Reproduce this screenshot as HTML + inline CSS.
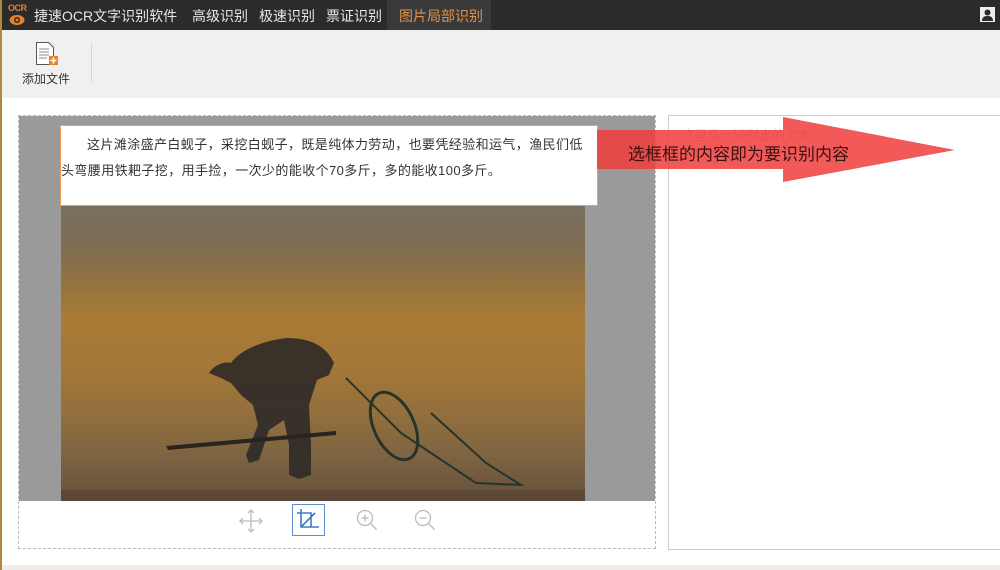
<!DOCTYPE html>
<html><head><meta charset="utf-8"><style>
*{margin:0;padding:0;box-sizing:border-box}
body{width:1000px;height:570px;overflow:hidden;background:#fff;font-family:"Liberation Sans","Noto Sans CJK SC",sans-serif;position:relative}
.abs{position:absolute}
</style></head><body>
<div class="abs" style="left:0;top:0;width:1000px;height:30px;background:#2b2b2b"></div>
<div class="abs" style="left:0;top:0;width:2px;height:570px;background:#b08a3a"></div>
<div class="abs" style="left:8px;top:3px;font-size:9px;color:#e8822a;font-weight:bold;letter-spacing:-0.5px">OCR</div>
<svg class="abs" style="left:9px;top:14px" width="16" height="12" viewBox="0 0 16 12"><ellipse cx="8" cy="6" rx="7.5" ry="5" fill="#e8822a"/><circle cx="8" cy="6" r="3" fill="#2b2b2b"/><circle cx="8" cy="6" r="1.5" fill="#e8822a"/></svg>
<div class="abs" style="left:34px;top:6px;font-size:14px;color:#e6e6e6">捷速OCR文字识别软件</div>
<div class="abs" style="left:192px;top:6px;font-size:14px;color:#e6e6e6">高级识别</div>
<div class="abs" style="left:259px;top:6px;font-size:14px;color:#e6e6e6">极速识别</div>
<div class="abs" style="left:326px;top:6px;font-size:14px;color:#e6e6e6">票证识别</div>
<div class="abs" style="left:387px;top:0;width:104px;height:30px;background:#3a3a3a"></div>
<div class="abs" style="left:399px;top:6px;font-size:14px;color:#e0904a">图片局部识别</div>
<svg class="abs" style="left:980px;top:7px" width="15" height="15" viewBox="0 0 15 15"><rect width="15" height="15" fill="#eee"/><circle cx="7.5" cy="5.5" r="3" fill="#2b2b2b"/><path d="M2 14c0-4 2.5-5 5.5-5s5.5 1 5.5 5z" fill="#2b2b2b"/></svg>
<div class="abs" style="left:2px;top:30px;width:998px;height:68px;background:#f0f0f0"></div>
<svg class="abs" style="left:35px;top:41px" width="25" height="25" viewBox="0 0 25 25"><path d="M1.5 1.5h12l5 5v17h-17z" fill="#fff" stroke="#555"/><path d="M4 8h10M4 11h10M4 14h10M4 17h8" stroke="#888"/><rect x="14" y="15" width="9" height="9" fill="#e8822a"/><path d="M18.5 16.5v6M15.5 19.5h6" stroke="#fff" stroke-width="1.6"/></svg>
<div class="abs" style="left:22px;top:70px;font-size:12px;color:#333">添加文件</div>
<div class="abs" style="left:91px;top:42px;width:1px;height:40px;background:#d8d8d8"></div>

<div class="abs" style="left:18px;top:115px;width:638px;height:434px;border:1px dashed #bbb"></div>
<div class="abs" style="left:19px;top:116px;width:636px;height:385px;background:#9a9a9a"></div>
<div class="abs" style="left:61px;top:198px;width:524px;height:303px;background:linear-gradient(#7a7064 0%,#7e6c54 15%,#94733f 28%,#a87a36 40%,#a57838 55%,#94703c 70%,#7e6442 85%,#64503c 100%)"></div>
<svg class="abs" style="left:61px;top:198px" width="524" height="303" viewBox="0 0 524 303">
<path d="M148 175c5-8 15-12 22-10 8-12 30-22 55-25 25 0 40 8 48 25l-5 12-12 5-8 25 2 40 0 30-12 4-10-4 0-30-5-25-15 10-10 30-10 3-3-8 12-30-5-20-12-10-10-12-10-5z" fill="#2f2a28" opacity="0.9"/>
<path d="M105 248l170-15 0 4-168 15z" fill="#2a2420"/>
<path d="M285 180l55 55 75 50 45 2-35-22-55-50" fill="none" stroke="#26342c" stroke-width="2"/>
<ellipse cx="333" cy="228" rx="20" ry="36" transform="rotate(-25 333 228)" fill="none" stroke="#26342c" stroke-width="3"/>
<path d="M0 292h524v11H0z" fill="#4a3a2e" opacity="0.4"/>
</svg>
<div class="abs" style="left:60px;top:125px;width:538px;height:81px;background:#fff;border:1.5px solid #f0a050"></div>
<div class="abs" style="left:61px;top:132px;font-size:13px;line-height:26px;color:#333;letter-spacing:0.4px;white-space:nowrap"><span style="padding-left:26px"></span>这片滩涂盛产白蚬子，采挖白蚬子，既是纯体力劳动，也要凭经验和运气，渔民们低<br>头弯腰用铁耙子挖，用手捡，一次少的能收个70多斤，多的能收100多斤。</div>

<div class="abs" style="left:668px;top:115px;width:340px;height:435px;border:1px solid #ccc"></div>
<div class="abs" style="left:681px;top:125px;font-size:13px;color:#ccc">这里显示识别出的文本</div>

<svg class="abs" style="left:597px;top:117px" width="360" height="68" viewBox="0 0 360 68"><path d="M0 13h186V0l172 33L186 65V52H0z" fill="#f03c3c" opacity="0.85"/></svg>
<div class="abs" style="left:628px;top:140px;font-size:17px;color:#3a1010">选框框的内容即为要识别内容</div>

<svg class="abs" style="left:238px;top:508px" width="26" height="26" viewBox="0 0 26 26" fill="none" stroke="#bbb" stroke-width="1.3"><path d="M13 2v22M2 13h22M10 5l3-3 3 3M10 21l3 3 3-3M5 10l-3 3 3 3M21 10l3 3-3 3"/></svg>
<div class="abs" style="left:292px;top:504px;width:33px;height:32px;border:1px solid #5b8fc7"></div>
<svg class="abs" style="left:296px;top:508px" width="24" height="24" viewBox="0 0 24 24" fill="none" stroke="#3d7bc0" stroke-width="1.6"><path d="M5 1v18h18M1 5h14v14M5 19L19 5"/></svg>
<svg class="abs" style="left:355px;top:508px" width="24" height="24" viewBox="0 0 24 24" fill="none" stroke="#bbb" stroke-width="1.3"><circle cx="10" cy="10" r="7.5"/><path d="M15.5 15.5l6 6M6.5 10h7M10 6.5v7"/></svg>
<svg class="abs" style="left:413px;top:508px" width="24" height="24" viewBox="0 0 24 24" fill="none" stroke="#bbb" stroke-width="1.3"><circle cx="10" cy="10" r="7.5"/><path d="M15.5 15.5l6 6M6.5 10h7"/></svg>
<div class="abs" style="left:2px;top:565px;width:998px;height:5px;background:#f1ecea"></div>
</body></html>
